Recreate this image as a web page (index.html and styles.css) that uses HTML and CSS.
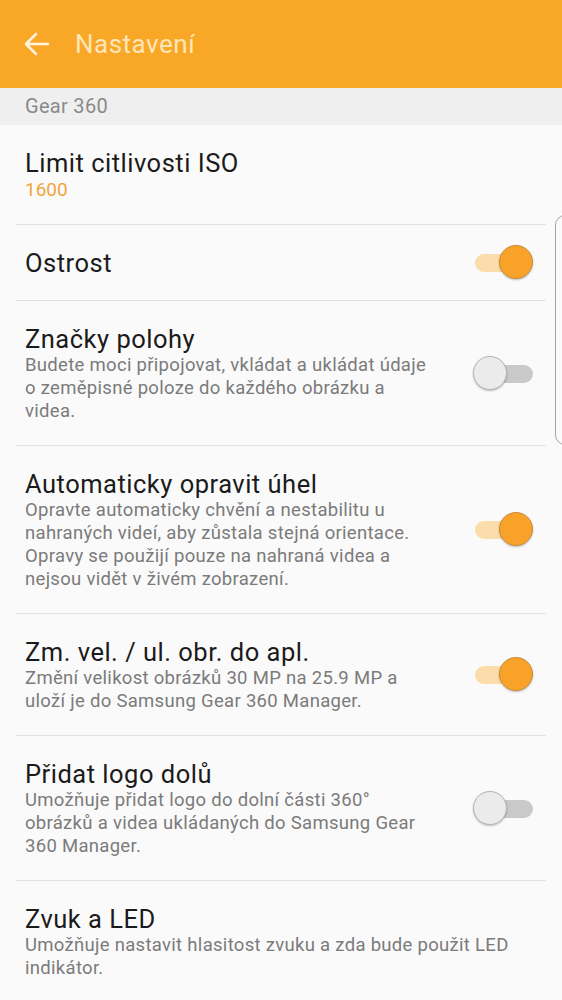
FILE: index.html
```html
<!DOCTYPE html>
<html lang="cs">
<head>
    <meta charset="UTF-8">
    <meta name="viewport" content="width=device-width, initial-scale=1.0">
    <title>Nastavení</title>
    <link rel="stylesheet" href="styles.css">
</head>
<body>
    <header class="appbar">
        <svg class="back" width="26" height="24" viewBox="0 0 26 24">
            <path d="M24 12H3M12 2L2 12l10 10" fill="none" stroke="#fff3de" stroke-width="2.6" stroke-linecap="round" stroke-linejoin="round"/>
        </svg>
        <h1>Nastavení</h1>
    </header>

    <div class="section">Gear 360</div>

    <ul class="list">
        <li class="item">
            <div class="text">
                <div class="title">Limit citlivosti ISO</div>
                <div class="value">1600</div>
            </div>
        </li>
        <li class="item">
            <div class="text">
                <div class="title">Ostrost</div>
            </div>
            <span class="switch on"></span>
        </li>
        <li class="item">
            <div class="text">
                <div class="title">Značky polohy</div>
                <div class="desc">Budete moci připojovat, vkládat a ukládat údaje<br>o zeměpisné poloze do každého obrázku a<br>videa.</div>
            </div>
            <span class="switch"></span>
        </li>
        <li class="item">
            <div class="text">
                <div class="title">Automaticky opravit úhel</div>
                <div class="desc">Opravte automaticky chvění a nestabilitu u<br>nahraných videí, aby zůstala stejná orientace.<br>Opravy se použijí pouze na nahraná videa a<br>nejsou vidět v živém zobrazení.</div>
            </div>
            <span class="switch on"></span>
        </li>
        <li class="item">
            <div class="text">
                <div class="title">Zm. vel. / ul. obr. do apl.</div>
                <div class="desc">Změní velikost obrázků 30 MP na 25.9 MP a<br>uloží je do Samsung Gear 360 Manager.</div>
            </div>
            <span class="switch on"></span>
        </li>
        <li class="item">
            <div class="text">
                <div class="title">Přidat logo dolů</div>
                <div class="desc">Umožňuje přidat logo do dolní části 360°<br>obrázků a videa ukládaných do Samsung Gear<br>360 Manager.</div>
            </div>
            <span class="switch"></span>
        </li>
        <li class="item">
            <div class="text">
                <div class="title">Zvuk a LED</div>
                <div class="desc">Umožňuje nastavit hlasitost zvuku a zda bude použit LED<br>indikátor.</div>
            </div>
        </li>
    </ul>

    <div class="edge-handle"></div>
</body>
</html>
```

FILE: styles.css
```css
body {
    margin: 0;
    font-family: Roboto, "Noto Sans", sans-serif;
    background-color: #fafafa;
    overflow: hidden;
    position: relative;
}
.appbar {
    height: 88px;
    background-color: #f9a727;
    display: flex;
    align-items: center;
    padding-left: 24px;
}
.appbar h1 {
    margin: 0 0 0 25px;
    font-size: 26px;
    letter-spacing: 0.5px;
    font-weight: 400;
    color: #fee6b8;
}
.section {
    height: 37px;
    line-height: 37px;
    background-color: #efefef;
    padding-left: 25px;
    font-size: 20px;
    letter-spacing: 0.3px;
    color: #8a8a8a;
}
.list {
    list-style: none;
    margin: 0;
    padding: 0;
}
.item {
    display: flex;
    align-items: center;
    padding: 23px 29px 23px 25px;
    position: relative;
}
.item + .item::before {
    content: "";
    position: absolute;
    top: -1px;
    left: 16px;
    right: 16px;
    height: 1px;
    background-color: #e3e3e3;
}
.text {
    flex: 1;
}
.title {
    font-size: 25.5px;
    letter-spacing: 0.5px;
    line-height: 30px;
    color: #1b1b1b;
}
.value {
    font-size: 19px;
    line-height: 24px;
    color: #f3a43c;
}
.desc {
    font-size: 18.5px;
    letter-spacing: 0.3px;
    line-height: 23px;
    color: #7b7b7b;
}
.switch {
    flex: none;
    width: 58px;
    height: 18px;
    border-radius: 9px;
    background-color: #c9c9c9;
    position: relative;
}
.switch::after {
    content: "";
    position: absolute;
    top: -9px;
    left: -2px;
    width: 32px;
    height: 32px;
    border-radius: 50%;
    background-color: #ebebeb;
    border: 1px solid #b5b5b5;
    box-shadow: 0 1px 2px rgba(0, 0, 0, 0.25);
}
.switch.on {
    background-color: #fbdcab;
}
.switch.on::after {
    left: auto;
    right: 0;
    background-color: #f8a22a;
    border-color: #c98f36;
}
.edge-handle {
    position: absolute;
    top: 215px;
    left: 555px;
    width: 20px;
    height: 228px;
    border: 1.5px solid #a3a3a3;
    border-radius: 10px;
    background-color: #fbfbfb;
}
```
